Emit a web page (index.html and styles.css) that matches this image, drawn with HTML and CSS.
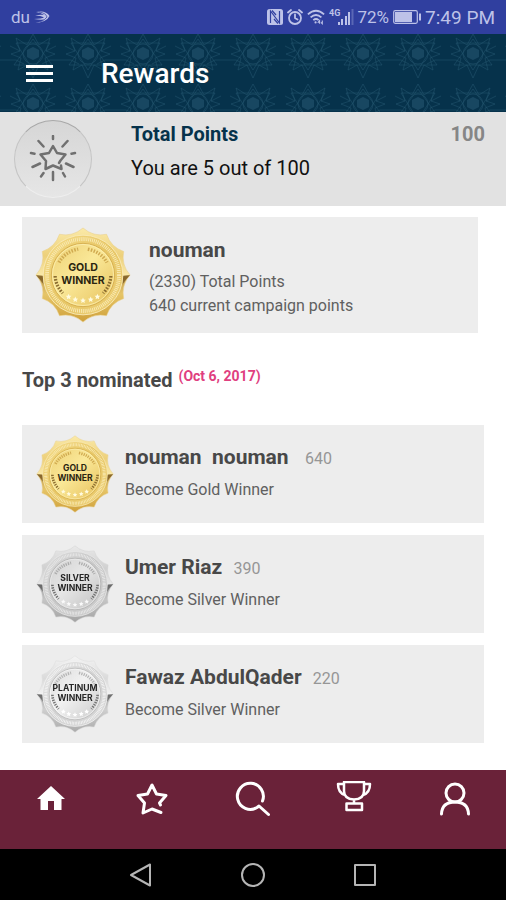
FILE: index.html
```html
<!DOCTYPE html>
<html lang="en">
<head>
<meta charset="utf-8">
<meta name="viewport" content="width=device-width, initial-scale=1">
<title>Rewards</title>
<link rel="stylesheet" href="styles.css">
</head>
<body>

	<!-- shared shapes -->
	<svg class="defs" width="0" height="0" aria-hidden="true">
		<defs>
			<linearGradient id="sealFill" x1="0" y1="0" x2="0" y2="1">
				<stop offset="0" stop-color="#fbeaa8"/>
				<stop offset=".3" stop-color="#edd07a"/>
				<stop offset=".5" stop-color="#f9e8a8"/>
				<stop offset=".52" stop-color="#c09c50"/>
				<stop offset=".7" stop-color="#e6c568"/>
				<stop offset="1" stop-color="#cfa03a"/>
			</linearGradient>
			<linearGradient id="ringFill" x1="0" y1="0" x2="1" y2="1">
				<stop offset="0" stop-color="#f5dc88"/>
				<stop offset=".5" stop-color="#e6c564"/>
				<stop offset="1" stop-color="#edcf76"/>
			</linearGradient>
			<linearGradient id="faceFill" x1="0" y1="0" x2="1" y2="1">
				<stop offset="0" stop-color="#edd075"/>
				<stop offset=".45" stop-color="#fae898"/>
				<stop offset="1" stop-color="#e6c05a"/>
			</linearGradient>
			<symbol id="seal" viewBox="0 0 100 100">
				<path fill="url(#sealFill)" stroke="#ead08a" stroke-width=".6" stroke-linejoin="round" d="M50 1Q60.6 10.4 74.5 7.6Q79 21 92.4 25.5Q89.6 39.4 99 50Q89.6 60.6 92.4 74.5Q79 79 74.5 92.4Q60.6 89.6 50 99Q39.4 89.6 25.5 92.4Q21 79 7.6 74.5Q10.4 60.6 1 50Q10.4 39.4 7.6 25.5Q21 21 25.5 7.6Q39.4 10.4 50 1Z"/>
				<path fill="#76551f" opacity=".75" d="M1 50L9 51L9 60Q5 54 1 50ZM99 50L91 51L91 60Q95 54 99 50Z"/>
				<circle cx="50" cy="50" r="41.5" fill="url(#ringFill)" stroke="#f9e9b4" stroke-width="1"/>
				<circle cx="50" cy="50" r="37.5" fill="none" stroke="#f9eab2" stroke-width="4" stroke-dasharray="1 1"/>
				<circle cx="50" cy="50" r="33" fill="url(#faceFill)" stroke="#d6b050" stroke-width="1"/>
				<circle cx="50" cy="50" r="31.8" fill="none" stroke="#fdf0b4" stroke-width=".8"/>
				<!-- laurel -->
				<g fill="none" stroke="#d0aa50" stroke-width="3.6" stroke-dasharray="1.6 1.4">
					<path d="M25 37Q31 26 45 23"/>
					<path d="M55 23Q69 26 75 37"/>
				</g>
				<g fill="none" stroke="#8a6c30" stroke-width="3.4" stroke-dasharray="1.7 1.5">
					<path d="M21 51Q21.500 61 29 69"/>
					<path d="M79 51Q78.500 61 71 69"/>
				</g>
				<g fill="#fffbe0">
					<path id="star" d="M50 73.500L50.900 75.500L53 75.700L51.400 77.100L51.900 79.200L50 78.100L48.100 79.200L48.600 77.100L47 75.700L49.100 75.500Z"/>
					<use href="#star" x="-8" y="-1"/>
					<use href="#star" x="8" y="-1"/>
					<use href="#star" x="-15" y="-4"/>
					<use href="#star" x="15" y="-4"/>
				</g>
			</symbol>
		</defs>
	</svg>

	<div class="status">
		<span class="carrier">du</span>
		<svg class="swift" width="16" height="13" viewBox="0 0 16 13" aria-hidden="true">
			<path fill="currentColor" d="M2 1Q12-1 15.500 5Q13 11 1 12Q8 10.500 10 8.500Q6 9 0 8Q8 7.500 10 6.500Q7 4.500 1 4.500Q6 3.500 10 4Q7 1.500 2 1Z"/>
			<path fill="none" stroke="#303f9f" stroke-width=".7" d="M5 1Q12 2 13 6Q11 9 6 11"/>
		</svg>
		<div class="status_right">
			<svg width="16" height="16" viewBox="0 0 16 16" aria-hidden="true">
				<path fill="currentColor" d="M2.500 0H13.500Q16 0 16 2.500V13.500Q16 16 13.500 16H2.500Q0 16 0 13.500V2.500Q0 0 2.500 0Z"/>
				<path d="M3.500 14V2L12.500 14V2M5 1.500L9 6M7 10L11 14.500" fill="none" stroke="#303f9f" stroke-width="1.200"/>
			</svg>
			<svg width="16" height="16" viewBox="0 0 16 16" fill="none" stroke="currentColor" stroke-width="1.800" stroke-linecap="round" aria-hidden="true">
				<circle cx="8" cy="9" r="6"/>
				<path d="M8 5.500V9L10.500 10.500M1 3.500L4 1M15 3.500L12 1"/>
			</svg>
			<svg width="18" height="16" viewBox="0 0 20 16" fill="none" stroke="currentColor" stroke-width="2" aria-hidden="true">
				<path d="M1 5Q10-3 19 5M4 8.500Q10 3 16 8.500M7 11.500Q10 9 13 11.500"/>
				<circle cx="9.500" cy="14" r="1.200" fill="currentColor" stroke="none"/>
				<path d="M12 14.500L14 12V15.500M17 12V15.500L15.500 14" stroke-width="1.200"/>
			</svg>
			<svg width="25" height="18" viewBox="0 0 25 18" aria-hidden="true">
				<text class="net" x="0" y="8">4G</text>
				<path fill="currentColor" d="M9 14h2v3H9zM12 11h2v6h-2zM16 8h2v9h-2zM19 4h2v13h-2z"/>
				<path fill="currentColor" opacity=".3" d="M22.500 1h2v16h-2z"/>
			</svg>
			<span class="percent">72%</span>
			<svg class="battery" width="28" height="14" viewBox="0 0 28 14" aria-hidden="true">
				<rect x=".7" y=".7" width="23.600" height="12.600" rx="1.500" fill="none" stroke="currentColor" stroke-width="1.200"/>
				<path fill="currentColor" d="M2 2h17v10h-17zM26 3.500h2v7h-2z"/>
			</svg>
			<span class="clock">7:49 PM</span>
		</div>
	</div>

	<header class="top">
		<button type="button" class="menu" aria-label="Menu"><i></i><i></i><i></i></button>
		<h1>Rewards</h1>
	</header>

	<section class="points">
		<div class="points_icon">
			<svg width="48" height="48" viewBox="0 0 48 48" fill="none" stroke="#707070" stroke-width="2.500" stroke-linecap="round" stroke-linejoin="round" aria-hidden="true">
				<path d="M32 30.500L32.500 34L24 30.500L16.500 34L17 26L11.500 19.500L20 18L24 11L28 18L36.500 19.500L31.500 25.500L30 28"/>
				<path d="M24 1V4M24 37V45M9.500 6L14.500 11.500M38.500 6L33.500 11.500M2 18L5.500 18.700M46 18L42.500 18.700M3.500 32L11 28.500M44.500 32L37 28.500M12 41.500L14.500 38M36 41.500L34 38"/>
			</svg>
		</div>
		<div class="points_text">
			<div class="points_head"><h2>Total Points</h2><b>100</b></div>
			<p>You are 5 out of 100</p>
		</div>
	</section>

	<main>
		<div class="winner">
			<svg class="medal medal_big" viewBox="0 0 100 100" role="img" aria-label="Gold winner">
				<use href="#seal"/>
				<text x="50" y="46">GOLD</text>
				<text x="50" y="59">WINNER</text>
			</svg>
			<div class="winner_text">
				<h3>nouman</h3>
				<p>(2330) Total Points</p>
				<p>640 current campaign points</p>
			</div>
		</div>

		<div class="title">
			<h2>Top 3 nominated</h2>
			<span>(Oct 6, 2017)</span>
		</div>

		<ul class="list">
			<li>
				<svg class="medal" viewBox="0 0 100 100" role="img" aria-label="Gold winner">
					<use href="#seal"/>
					<text x="50" y="46">GOLD</text>
					<text x="50" y="59">WINNER</text>
				</svg>
				<div>
					<h3>nouman&nbsp; nouman&nbsp; <span>640</span></h3>
					<p>Become Gold Winner</p>
				</div>
			</li>
			<li>
				<svg class="medal silver" viewBox="0 0 100 100" role="img" aria-label="Silver winner">
					<use href="#seal"/>
					<text x="50" y="46">SILVER</text>
					<text x="50" y="59">WINNER</text>
				</svg>
				<div>
					<h3>Umer Riaz <span>390</span></h3>
					<p>Become Silver Winner</p>
				</div>
			</li>
			<li>
				<svg class="medal platinum" viewBox="0 0 100 100" role="img" aria-label="Platinum winner">
					<use href="#seal"/>
					<text x="50" y="46">PLATINUM</text>
					<text x="50" y="59">WINNER</text>
				</svg>
				<div>
					<h3>Fawaz AbdulQader <span>220</span></h3>
					<p>Become Silver Winner</p>
				</div>
			</li>
		</ul>
	</main>

	<nav class="tabs">
		<a href="#home" aria-label="Home">
			<svg width="36" height="36" viewBox="0 0 36 36"><path fill="currentColor" d="M18 5L32 18H28.500V29H21V20H15V29H7.500V18H4Z"/></svg>
		</a>
		<a href="#favourites" aria-label="Favourites">
			<svg class="line" width="36" height="36" viewBox="0 0 36 36"><path d="M26.500 24L25.500 22L32 14.500L22.500 13L18 4L13.500 13L4 14.500L10.500 22L9 32L18 28L27 31.500"/></svg>
		</a>
		<a href="#search" aria-label="Search">
			<svg class="line" width="36" height="36" viewBox="0 0 36 36"><path d="M27.500 20A13 13 0 1 0 22 26.500L24 25L33.500 33.500"/></svg>
		</a>
		<a href="#awards" aria-label="Awards">
			<svg class="line thin" width="36" height="36" viewBox="0 0 36 36"><path d="M8 1H28V10Q28 18 18 18.500Q8 18 8 10ZM8 3H2Q2 12 9 14M28 3H34Q34 12 27 14M18 18.500V22.500M10.500 22.500H26V29H10.500Z"/></svg>
		</a>
		<a href="#profile" aria-label="Profile">
			<svg class="line" width="36" height="36" viewBox="0 0 36 36"><circle cx="18" cy="12" r="9"/><path d="M4.500 33Q5 21 18 21Q31 21 31.500 33"/></svg>
		</a>
	</nav>

	<div class="keys">
		<button type="button" aria-label="Back"><svg width="24" height="24" viewBox="0 0 24 24"><path d="M21 1.500V22.500L2 12Z"/></svg></button>
		<button type="button" aria-label="Home screen"><svg width="24" height="24" viewBox="0 0 24 24"><circle cx="12" cy="12" r="11"/></svg></button>
		<button type="button" aria-label="Recent apps"><svg width="24" height="24" viewBox="0 0 24 24"><rect x="2" y="2" width="20" height="20"/></svg></button>
	</div>

</body>
</html>
```

FILE: styles.css
```css
html, body, div, h1, h2, h3, p, ul, li {
	margin: 0;
	padding: 0;
}

body {
	min-height: 100vh;
	display: flex;
	flex-direction: column;
	font-family: Roboto, "Liberation Sans", sans-serif;
	background: #fff;
	color: #484848;
}

li {
	list-style: none;
}

svg {
	display: block;
	flex: none;
}

.defs {
	position: absolute;
}

button {
	border: 0;
	padding: 0;
	background: none;
	cursor: pointer;
}

/* status bar */
.status {
	height: 34px;
	padding: 0 11px;
	display: flex;
	align-items: center;
	background: #303f9f;
	color: #bdc2e8;
}

.carrier {
	font-size: 17px;
}

.swift {
	margin-left: 4px;
}

.status_right {
	margin-left: auto;
	display: flex;
	align-items: center;
	gap: 4px;
}

.net {
	font-size: 9px;
	font-weight: 700;
	fill: currentColor;
}

.percent {
	font-size: 17px;
}

.clock {
	font-size: 19px;
}

/* header */
.top {
	height: 78px;
	box-sizing: border-box;
	padding-left: 26px;
	display: flex;
	align-items: center;
	background-color: #06324b;
	background-image: url("data:image/svg+xml,%3Csvg xmlns='http://www.w3.org/2000/svg' width='55' height='50'%3E%3Cg fill='none' stroke='%23245570' stroke-opacity='.5' stroke-width='1'%3E%3Cpath d='M27 0L33 11L44 4L40 17L49 20L39 24L42 36L33 31L27 44L21 31L12 36L15 24L5 20L14 17L10 4L21 11Z'/%3E%3Cpath d='M27 5L46 31L8 31ZM27 36L10 9L44 9Z'/%3E%3Cpath d='M0 26H10L18 30M55 26H44L36 30M4 12L14 17M50 12L40 17'/%3E%3Ccircle cx='27' cy='20' r='10'/%3E%3C/g%3E%3Cpath d='M27 13L33 16V23L27 26L21 23V16Z' fill='%23245570' fill-opacity='.6'/%3E%3C/svg%3E");
	background-position: 6px 0;
	color: #fff;
}

.menu {
	width: 27px;
	display: flex;
	flex-direction: column;
	gap: 4px;
}

.menu i {
	height: 3px;
	background: #fff;
}

.top h1 {
	margin-left: 48px;
	font-size: 28px;
	font-weight: 500;
}

/* total points */
.points {
	padding: 8px 21px 8px 14px;
	display: flex;
	background: #e2e2e2;
}

.points_icon {
	width: 78px;
	height: 78px;
	box-sizing: border-box;
	flex: none;
	display: flex;
	align-items: center;
	justify-content: center;
	border: 1px solid #c4c4c4;
	border-color: #a8a8a8 #c4c4c4 #eee;
	border-radius: 50%;
	background: linear-gradient(#d6d6d6, #e6e6e6);
}

.points_text {
	flex: 1;
	margin-left: 39px;
}

.points_head {
	display: flex;
	justify-content: space-between;
	font-size: 20px;
	line-height: 28px;
}

.points_head h2 {
	font-size: 20px;
	color: #06324b;
}

.points_head b {
	color: #868686;
}

.points_text p {
	margin-top: 6px;
	font-size: 20px;
	line-height: 28px;
	color: #111;
}

main {
	flex: 1;
	padding: 11px 22px 26px;
}

/* medals */
.medal {
	width: 78px;
	height: 78px;
}

.medal_big {
	width: 96px;
	height: 96px;
}

.medal text {
	font-family: Inter, sans-serif;
	font-size: 11px;
	font-weight: 700;
	text-anchor: middle;
	fill: #2b2510;
}

.silver {
	filter: grayscale(1);
}

.platinum {
	filter: grayscale(1) brightness(1.05);
}

/* own result */
.winner {
	margin-right: 6px;
	padding: 10px 13px;
	display: flex;
	background: #ededed;
}

.winner_text {
	margin: 9px 0 0 18px;
}

.winner h3 {
	font-size: 21px;
	line-height: 28px;
	margin-bottom: 6px;
}

.winner p {
	font-size: 16px;
	line-height: 24px;
	color: #606060;
}

.title {
	display: flex;
	margin: 32px 0 30px;
}

.title h2 {
	font-size: 20px;
	line-height: 30px;
}

.title span {
	margin-left: 6px;
	font-size: 14px;
	line-height: 22px;
	font-weight: 700;
	color: #e0407f;
}

/* nominated */
.list {
	display: grid;
	gap: 12px;
}

.list li {
	padding: 10px 14px;
	display: flex;
	background: #ededed;
}

.list li div {
	margin: 8px 0 0 11px;
}

.list h3 {
	font-size: 21px;
	line-height: 28px;
}

.list h3 span {
	margin-left: 6px;
	font-size: 16px;
	font-weight: 400;
	color: #969696;
}

.list p {
	margin-top: 6px;
	font-size: 16px;
	line-height: 22px;
	color: #606060;
}

/* bottom tabs */
.tabs {
	height: 79px;
	display: flex;
	background: #6a2239;
}

.tabs a {
	flex: 1;
	display: flex;
	justify-content: center;
	padding-top: 11px;
	color: #fff;
}

.line {
	fill: none;
	stroke: currentColor;
	stroke-width: 3;
	stroke-linecap: round;
	stroke-linejoin: round;
}

.thin {
	stroke-width: 2.5;
}

/* phone keys */
.keys {
	height: 51px;
	display: flex;
	justify-content: center;
	align-items: center;
	background: #000;
}

.keys button {
	width: 112px;
	display: flex;
	justify-content: center;
}

.keys svg {
	fill: none;
	stroke: #b5b5b5;
	stroke-width: 2;
	stroke-linejoin: round;
}
```
